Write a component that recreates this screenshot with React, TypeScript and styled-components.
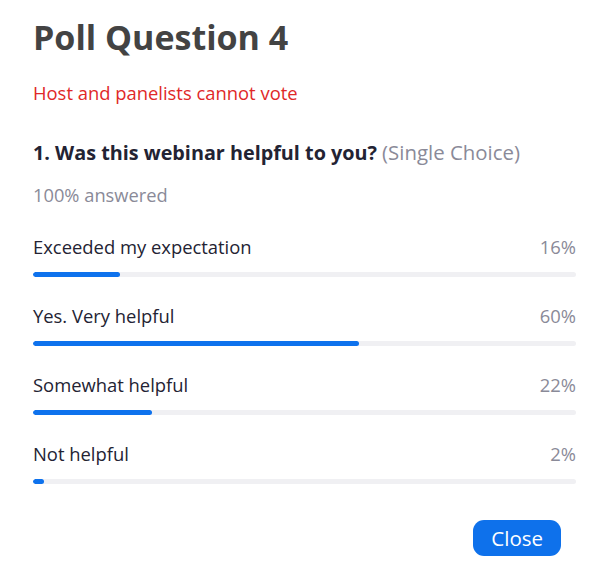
import React from "react";
import styled, { createGlobalStyle } from "styled-components";

const Global = createGlobalStyle`
  html, body { margin: 0; padding: 0; background: #fff; }
  body { font-family: "Open Sans", "Noto Sans", sans-serif; }
`;

const Panel = styled.div`
  width: 592px;
  height: 572px;
  box-sizing: border-box;
  padding: 13px 16px 0 33px;
  display: flex;
  flex-direction: column;
`;

const Title = styled.h1`
  margin: 0;
  font-size: 34px;
  line-height: 48px;
  font-weight: 700;
  color: #434343;
`;

const Warning = styled.div`
  margin-top: 19px;
  font-size: 18.4px;
  line-height: 26px;
  color: #e02828;
`;

const Question = styled.div`
  margin-top: 32px;
  font-size: 19.8px;
  line-height: 28px;
  color: #232333;
`;

const QText = styled.span`
  font-weight: 700;
`;

const QType = styled.span`
  color: #8a8a98;
  font-size: 20.4px;
`;

const Answered = styled.div`
  margin-top: 15px;
  font-size: 18.3px;
  line-height: 26px;
  color: #8a8a98;
`;

const Options = styled.div`
  margin-top: 26px;
  display: flex;
  flex-direction: column;
  gap: 26px;
`;

const Option = styled.div`
  display: flex;
  flex-direction: column;
`;

const Row = styled.div`
  display: flex;
  justify-content: space-between;
  font-size: 18.4px;
  line-height: 26px;
`;

const Label = styled.span`
  color: #232333;
`;

const Pct = styled.span`
  color: #8a8a98;
`;

const Track = styled.div`
  margin-top: 12px;
  height: 5px;
  border-radius: 3px;
  background: #f0f0f3;
  overflow: hidden;
`;

const Fill = styled.div`
  height: 100%;
  border-radius: 3px;
  background: #0e72ed;
`;

const Footer = styled.div`
  margin-top: auto;
  margin-bottom: 16px;
  display: flex;
  justify-content: flex-end;
  padding-right: 15px;
`;

const Button = styled.button`
  border: none;
  background: #0e71eb;
  color: #fff;
  font-family: inherit;
  font-size: 20.5px;
  height: 36px;
  padding: 0 18px;
  border-radius: 11px;
  cursor: pointer;
`;

const data = [
  { label: "Exceeded my expectation", pct: 16 },
  { label: "Yes. Very helpful", pct: 60 },
  { label: "Somewhat helpful", pct: 22 },
  { label: "Not helpful", pct: 2 },
];

export default function App() {
  return (
    <>
      <Global />
      <Panel>
        <Title>Poll Question 4</Title>
        <Warning>Host and panelists cannot vote</Warning>
        <Question>
          <QText>1. Was this webinar helpful to you?</QText> <QType>(Single Choice)</QType>
        </Question>
        <Answered>100% answered</Answered>
        <Options>
          {data.map((d) => (
            <Option key={d.label}>
              <Row>
                <Label>{d.label}</Label>
                <Pct>{d.pct}%</Pct>
              </Row>
              <Track>
                <Fill style={{ width: `${d.pct}%` }} />
              </Track>
            </Option>
          ))}
        </Options>
        <Footer>
          <Button>Close</Button>
        </Footer>
      </Panel>
    </>
  );
}
